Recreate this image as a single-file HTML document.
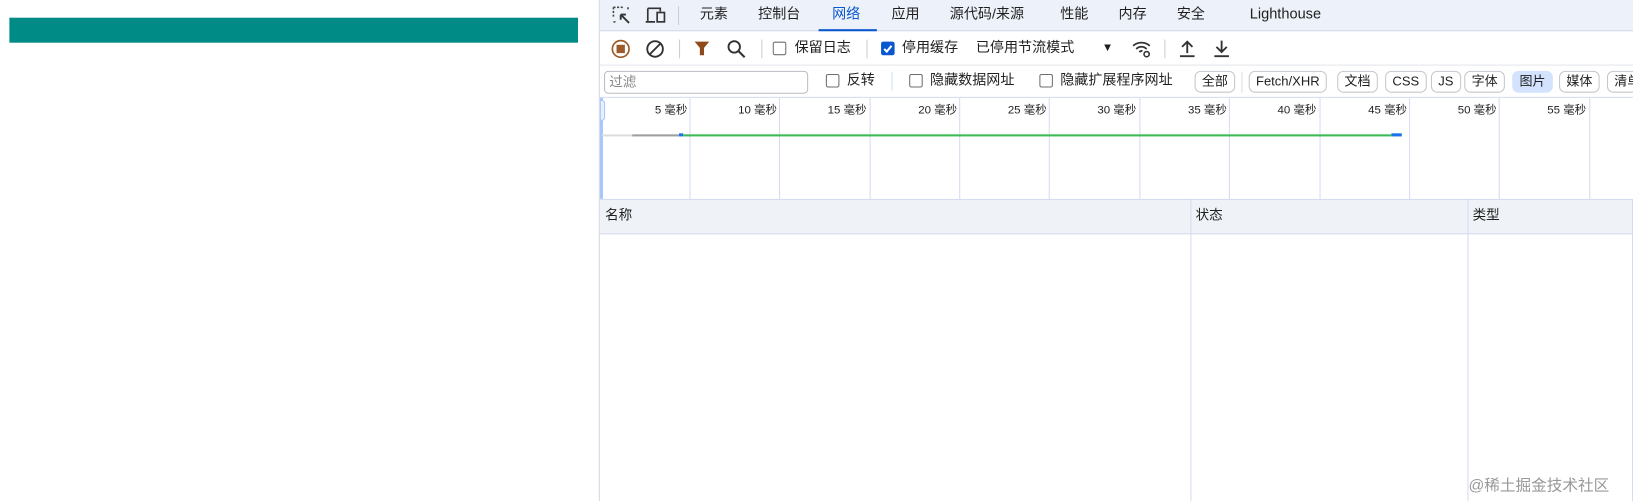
<!DOCTYPE html>
<html><head><meta charset="utf-8"><style>
*{margin:0;padding:0;box-sizing:border-box}
html,body{width:1633px;height:501px;overflow:hidden;background:#fff}
body{font-family:"Liberation Sans","Noto Sans CJK SC",sans-serif;font-size:13px;color:#1f1f1f;position:relative}
#w{position:absolute;left:0;top:0;width:1568px;height:481px;transform:scale(1.04145);transform-origin:0 0}
.a{position:absolute;white-space:nowrap;line-height:16px}
.bar{position:absolute;left:9px;top:17px;width:546px;height:24px;background:#008b87}
.dt{position:absolute;left:575px;top:0;width:993px;height:481px;border-left:1px solid #d3d9e6;overflow:hidden}
.tabs{position:absolute;left:0;top:0;width:100%;height:30px;background:#edf2fa;border-bottom:1px solid #d3d9e6}
.chk{position:absolute;width:13px;height:13px;border:1px solid #6e6e6e;border-radius:2px;background:#fff}
.pill{position:absolute;top:68px;height:21px;border:1px solid #c4c7cc;border-radius:6px;font-size:12.5px;line-height:19px;padding:0 6px;white-space:nowrap}
.vl{position:absolute;width:1px;background:#d6dcef}
.lbl{position:absolute;top:100px;font-size:11px;line-height:13px;text-align:right;width:80px}
</style></head><body><div id="w">
<div class="bar"></div>
<div class="dt">
<div class="tabs"></div>
<svg class="a" style="left:11px;top:5px" width="20" height="20" viewBox="0 0 20 20"><path d="M2 2h10M2 2v10M2 16h3M16 2v3" stroke="#444" stroke-width="1.5" stroke-dasharray="2 1.5" fill="none"/><path d="M9 9l8 8M9 9h5M9 9v5" stroke="#333" stroke-width="1.8" fill="none"/></svg>
<svg class="a" style="left:43px;top:5px" width="22" height="20" viewBox="0 0 22 20"><path d="M3 3h12v3M3 3v12M1 16h9" stroke="#333" stroke-width="1.6" fill="none"/><rect x="12" y="7" width="7" height="9" stroke="#333" stroke-width="1.6" fill="none"/></svg>
<div class="vl" style="left:75px;top:6px;height:18px;background:#ccc"></div>
<div class="a" style="left:96px;top:6px;font-size:13.5px">元素</div>
<div class="a" style="left:152px;top:6px;font-size:13.5px">控制台</div>
<div class="a" style="left:223px;top:6px;font-size:13.5px;color:#0b57d0">网络</div>
<div class="a" style="left:210px;top:28px;width:56px;height:2px;background:#0b57d0"></div>
<div class="a" style="left:280px;top:6px;font-size:13.5px">应用</div>
<div class="a" style="left:336px;top:6px;font-size:13.5px">源代码/来源</div>
<div class="a" style="left:442px;top:6px;font-size:13.5px">性能</div>
<div class="a" style="left:498px;top:6px;font-size:13.5px">内存</div>
<div class="a" style="left:554px;top:6px;font-size:13.5px">安全</div>
<div class="a" style="left:624px;top:5px;font-size:14px">Lighthouse</div>
<svg class="a" style="left:10px;top:37px" width="20" height="20"><circle cx="10" cy="10" r="8" stroke="#9c5a2a" stroke-width="1.6" fill="none"/><rect x="6" y="6" width="8" height="8" fill="#9c5a2a"/></svg>
<svg class="a" style="left:43px;top:37px" width="20" height="20"><circle cx="10" cy="10" r="7.5" stroke="#333" stroke-width="1.8" fill="none"/><path d="M5 15L15 5" stroke="#333" stroke-width="1.8"/></svg>
<div class="vl" style="left:76px;top:38px;height:18px;background:#ccc"></div>
<svg class="a" style="left:90px;top:38px" width="16" height="18"><path d="M1 2h14L10 8v7H6V8z" fill="#8e4a1a"/></svg>
<svg class="a" style="left:121px;top:37px" width="20" height="20"><circle cx="8" cy="8" r="5.5" stroke="#333" stroke-width="1.8" fill="none"/><path d="M12 12l6 6" stroke="#333" stroke-width="2"/></svg>
<div class="vl" style="left:155px;top:38px;height:18px;background:#ccc"></div>
<div class="chk" style="left:166px;top:40px"></div>
<div class="a" style="left:187px;top:38px;font-size:13.5px">保留日志</div>
<div class="vl" style="left:256px;top:38px;height:18px;background:#ccc"></div>
<div class="chk" style="left:270px;top:40px;background:#0b57d0;border-color:#0b57d0"><svg width="11" height="11" style="position:absolute;left:0;top:0"><path d="M2 6l2.5 2.5L9 3" stroke="#fff" stroke-width="2" fill="none"/></svg></div>
<div class="a" style="left:290px;top:38px;font-size:13.5px">停用缓存</div>
<div class="a" style="left:361px;top:38px;font-size:13.5px">已停用节流模式</div>
<div class="a" style="left:482px;top:38px;font-size:11px">▼</div>
<svg class="a" style="left:510px;top:37px" width="22" height="20"><path d="M2 7a12 12 0 0 1 16 0M5 10a7 7 0 0 1 10 0M8 13a3 3 0 0 1 3-1" stroke="#333" stroke-width="1.7" fill="none"/><circle cx="15" cy="15" r="2.5" stroke="#333" stroke-width="1.5" fill="none"/></svg>
<div class="vl" style="left:542px;top:38px;height:18px;background:#ccc"></div>
<svg class="a" style="left:555px;top:37px" width="18" height="20"><path d="M9 14V3M4 8l5-5 5 5M2 17h14" stroke="#333" stroke-width="1.8" fill="none"/></svg>
<svg class="a" style="left:588px;top:37px" width="18" height="20"><path d="M9 2v11M4 8l5 5 5-5M2 17h14" stroke="#333" stroke-width="1.8" fill="none"/></svg>
<div class="a" style="left:0;top:62px;width:100%;height:1px;background:#e3e6ec"></div>
<div class="a" style="left:4px;top:68px;width:196px;height:22px;border:1px solid #b9bcc2;border-radius:4px;color:#888;padding:2px 4px;font-size:13px">过滤</div>
<div class="chk" style="left:217px;top:71px"></div>
<div class="a" style="left:237px;top:69px;font-size:13.5px">反转</div>
<div class="vl" style="left:280px;top:69px;height:18px;background:#cfe0f5"></div>
<div class="chk" style="left:297px;top:71px"></div>
<div class="a" style="left:317px;top:69px;font-size:13.5px">隐藏数据网址</div>
<div class="chk" style="left:422px;top:71px"></div>
<div class="a" style="left:442px;top:69px;font-size:13.5px">隐藏扩展程序网址</div>
<div class="pill" style="left:571px">全部</div>
<div class="vl" style="left:616px;top:69px;height:20px;background:#ddd"></div>
<div class="pill" style="left:623px">Fetch/XHR</div>
<div class="pill" style="left:708px">文档</div>
<div class="pill" style="left:754px">CSS</div>
<div class="pill" style="left:798px">JS</div>
<div class="pill" style="left:830px">字体</div>
<div class="pill" style="left:876px;background:#d3e3fd;border-color:#d3e3fd">图片</div>
<div class="pill" style="left:921px">媒体</div>
<div class="pill" style="left:967px">清单</div>
<div class="a" style="left:0;top:93px;width:100%;height:1px;background:#d6dcef"></div>
<div class="a" style="left:0;top:94px;width:3px;height:97px;background:#a8c7fa"></div>
<div class="a" style="left:0;top:96px;width:5px;height:20px;border:1px solid #a8c7fa;border-radius:0 3px 3px 0;background:#e8f0fe"></div>
<div class="vl" style="left:86px;top:94px;height:97px"></div>
<div class="vl" style="left:172px;top:94px;height:97px"></div>
<div class="vl" style="left:259px;top:94px;height:97px"></div>
<div class="vl" style="left:345px;top:94px;height:97px"></div>
<div class="vl" style="left:431px;top:94px;height:97px"></div>
<div class="vl" style="left:518px;top:94px;height:97px"></div>
<div class="vl" style="left:604px;top:94px;height:97px"></div>
<div class="vl" style="left:691px;top:94px;height:97px"></div>
<div class="vl" style="left:777px;top:94px;height:97px"></div>
<div class="vl" style="left:863px;top:94px;height:97px"></div>
<div class="vl" style="left:950px;top:94px;height:97px"></div>
<div class="lbl" style="left:4px">5 毫秒</div>
<div class="lbl" style="left:90px">10 毫秒</div>
<div class="lbl" style="left:176px">15 毫秒</div>
<div class="lbl" style="left:263px">20 毫秒</div>
<div class="lbl" style="left:349px">25 毫秒</div>
<div class="lbl" style="left:435px">30 毫秒</div>
<div class="lbl" style="left:522px">35 毫秒</div>
<div class="lbl" style="left:608px">40 毫秒</div>
<div class="lbl" style="left:695px">45 毫秒</div>
<div class="lbl" style="left:781px">50 毫秒</div>
<div class="lbl" style="left:867px">55 毫秒</div>
<div class="a" style="left:2px;top:129px;width:29px;height:2px;background:#ddd"></div>
<div class="a" style="left:31px;top:129px;width:45px;height:2px;background:#9e9e9e"></div>
<div class="a" style="left:76px;top:128px;width:4px;height:3px;background:#1a73e8"></div>
<div class="a" style="left:80px;top:129px;width:680px;height:2px;background:#3cba54"></div>
<div class="a" style="left:760px;top:128px;width:10px;height:3px;background:#1a73e8"></div>
<div class="a" style="left:0;top:191px;width:100%;height:34px;background:#eff3f8;border-top:1px solid #d6dcef;border-bottom:1px solid #d6dcef"></div>
<div class="vl" style="left:567px;top:191px;height:290px"></div>
<div class="vl" style="left:833px;top:191px;height:290px"></div>
<div class="vl" style="left:991px;top:191px;height:290px"></div>
<div class="a" style="left:5px;top:199px;font-size:13px">名称</div>
<div class="a" style="left:572px;top:199px;font-size:13px">状态</div>
<div class="a" style="left:838px;top:199px;font-size:13px">类型</div>
<div class="a" style="left:834px;top:458px;font-size:15px;line-height:18px;color:#999">@稀土掘金技术社区</div>
</div>
</div></body></html>
